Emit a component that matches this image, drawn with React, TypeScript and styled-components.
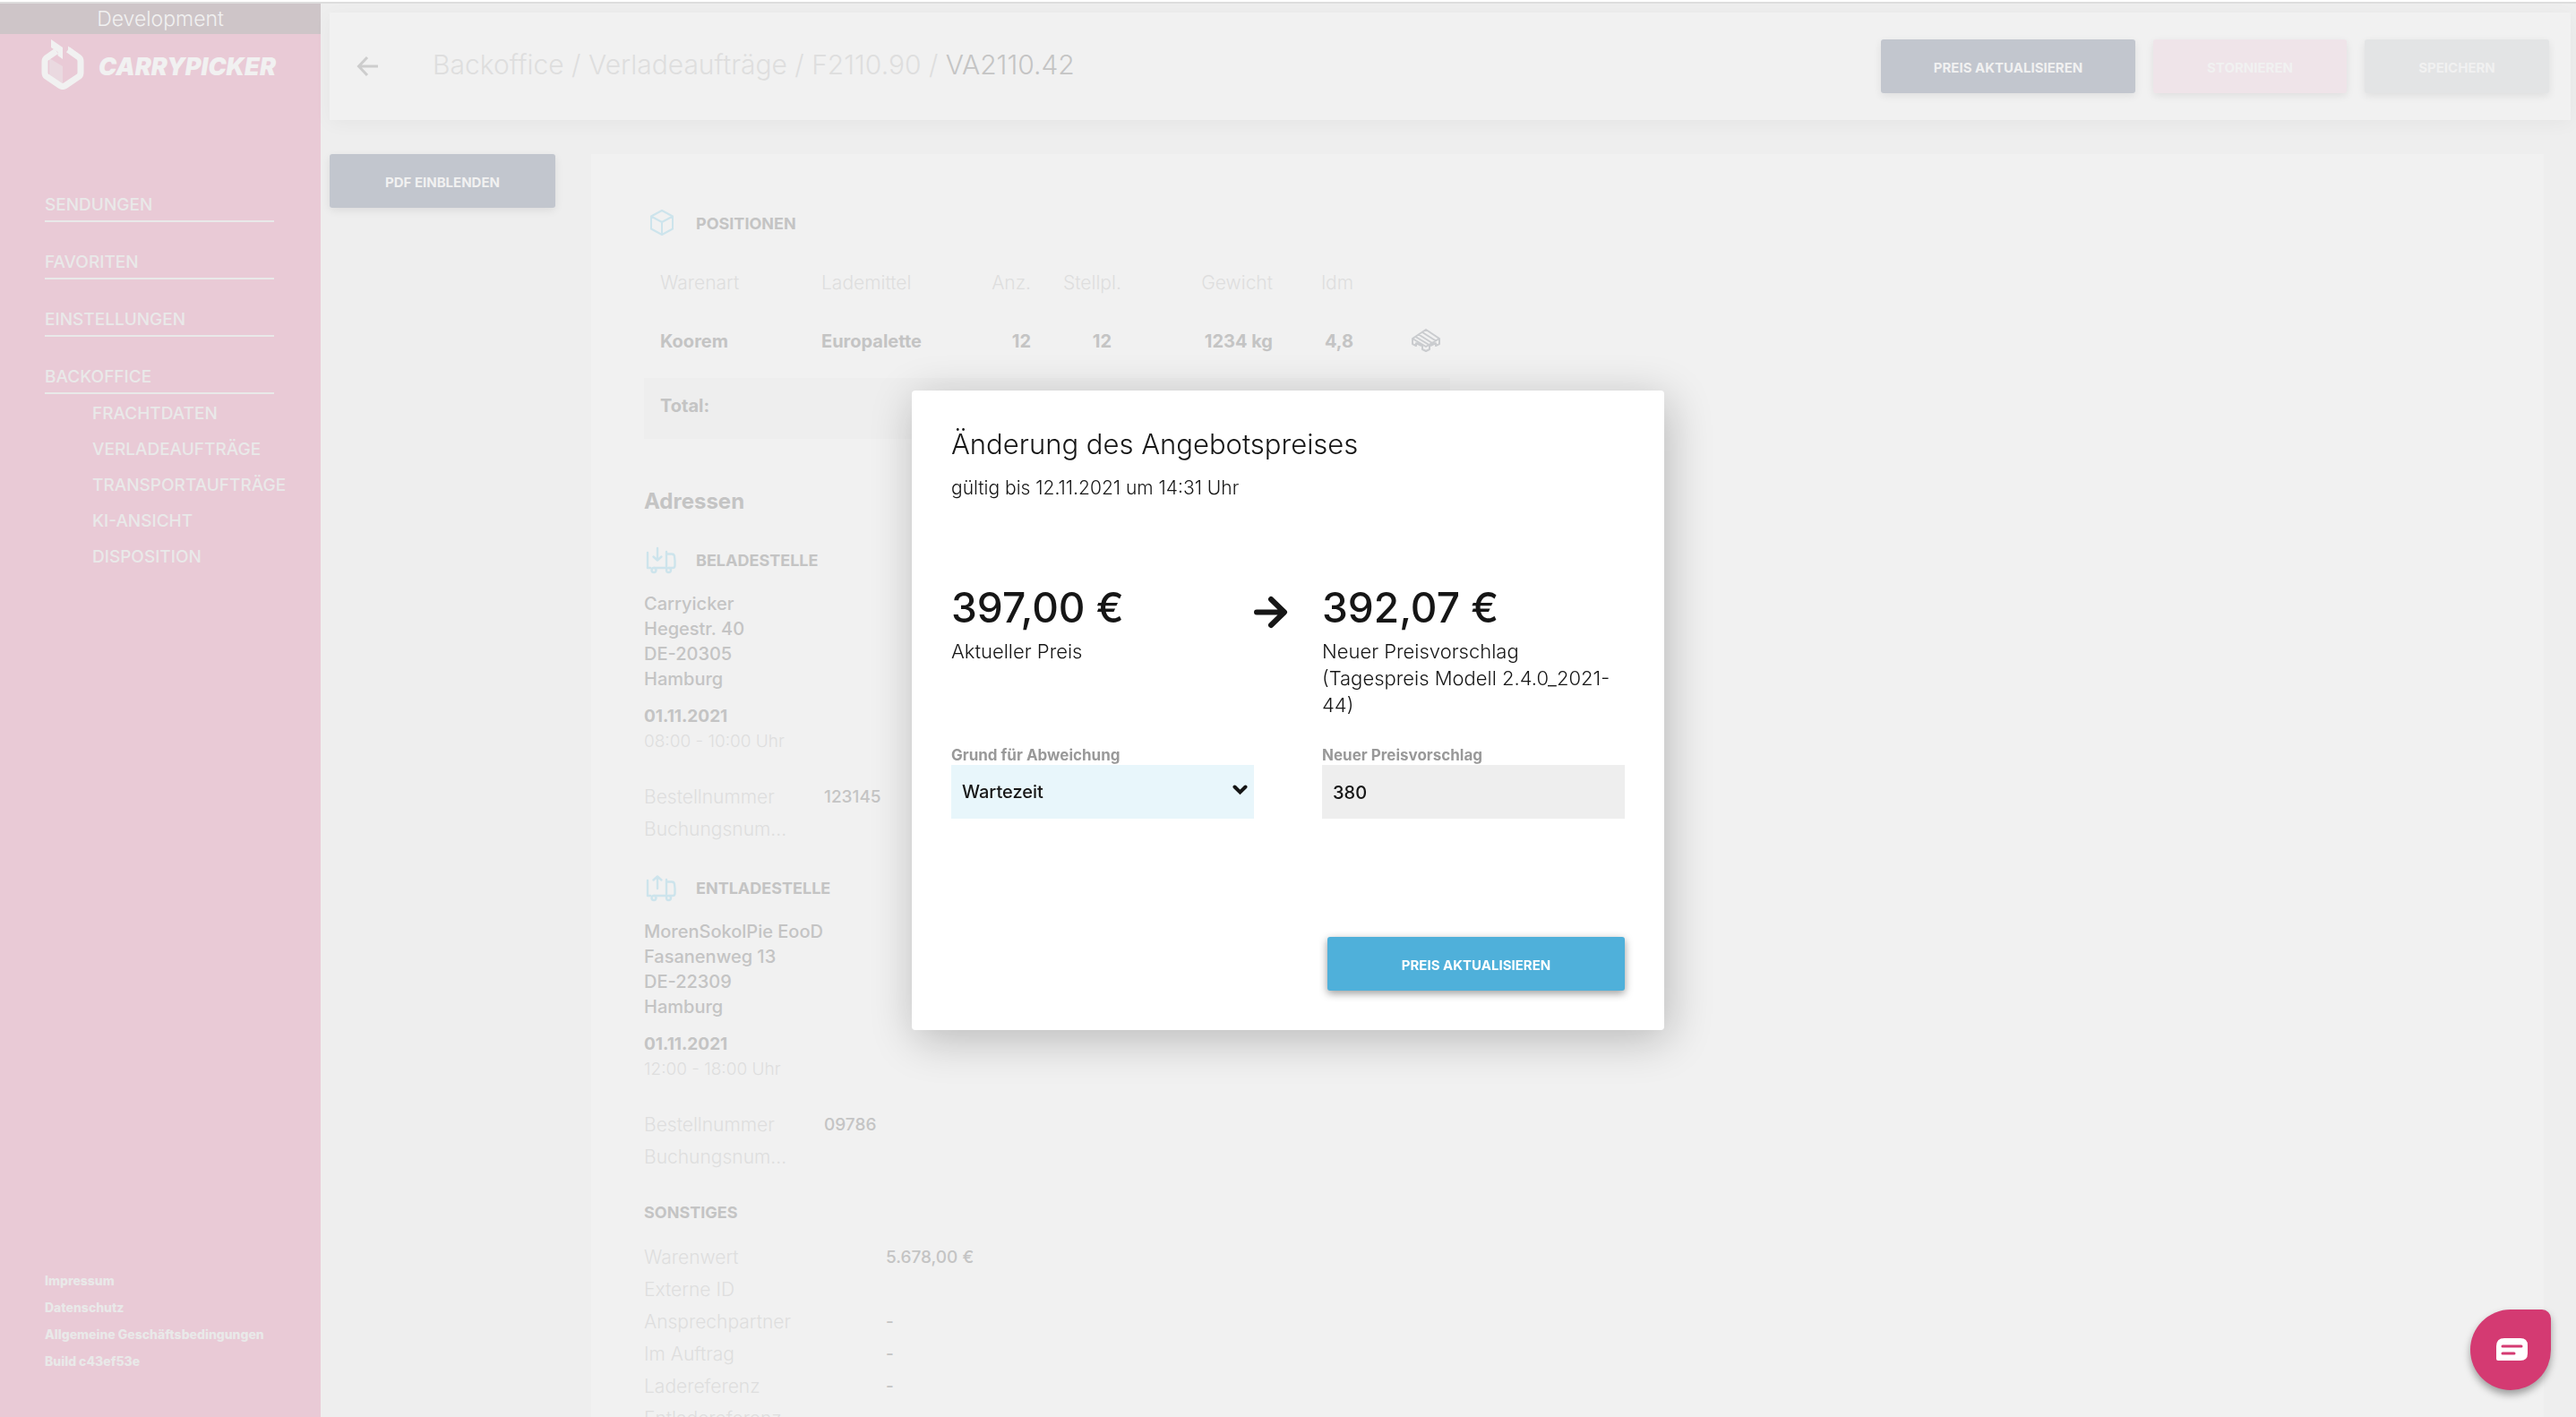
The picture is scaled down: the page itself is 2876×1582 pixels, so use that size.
import React from "react";
import styled, { createGlobalStyle } from "styled-components";

const color = {
  brand: "#e9cad6",
  brandText: "#e9e9e9",
  page: "#eeeeee",
  card: "#f1f1f1",
  strong: "#c4c4c4",
  faint: "#dedede",
  line: "#dddddd",
  icon: "#cde4ec",
  ink: "#161616",
};

const GlobalStyle = createGlobalStyle`
  * { box-sizing: border-box; }
  body {
    margin: 0;
    background: #ffffff;
    font-family: Inter, "Noto Sans", sans-serif;
    font-size: 20px;
    line-height: 28px;
  }
  h1, h2, h3, p, dl, dd, ul, address { margin: 0; padding: 0; }
  button, input, select { font-family: inherit; }
`;

const Shell = styled.div`
  display: flex;
  flex-direction: column;
  height: 100vh;
  padding-top: 2px;
  overflow: hidden;
`;

const Columns = styled.div`
  display: flex;
  flex: 1;
  min-height: 0;
  border-top: 2px solid ${color.line};
  background: ${color.page};
`;

const Sidebar = styled.aside`
  display: flex;
  flex-direction: column;
  flex: 0 0 358px;
  min-width: 0;
  background: ${color.brand};
  color: ${color.brandText};
`;

const Environment = styled.div`
  background: #cec5c8;
  color: #f1f1f1;
  font-size: 23px;
  font-weight: 300;
  line-height: 34px;
  text-align: center;
`;

const Brand = styled.a`
  display: flex;
  align-items: center;
  gap: 16px;
  padding: 6px 0 0 46px;
  color: ${color.card};
  font-size: 27px;
  font-style: italic;
  font-weight: 900;
  line-height: 32px;
  text-decoration: none;

  span { padding-top: 6px; }
`;

const Nav = styled.nav`
  display: flex;
  flex-direction: column;
  gap: 33px;
  padding: 117px 52px 0 50px;
`;

const NavLink = styled.a`
  display: block;
  padding-bottom: 5px;
  border-bottom: 2px solid ${color.brandText};
  color: inherit;
  font-size: 19px;
  font-weight: 500;
  line-height: 24px;
  text-decoration: none;
`;

const SubNav = styled.div`
  display: flex;
  flex-direction: column;
  gap: 16px;
  padding: 10px 0 0 53px;
`;

const SubLink = styled.a`
  color: inherit;
  font-size: 19px;
  font-weight: 500;
  line-height: 24px;
  text-decoration: none;
  white-space: nowrap;
`;

const Legal = styled.footer`
  display: flex;
  flex-direction: column;
  margin-top: auto;
  padding: 0 50px 47px;
  font-size: 14px;
  font-weight: 800;
  line-height: 30px;
  white-space: nowrap;

  a { color: inherit; text-decoration: none; }
`;

const Main = styled.main`
  display: flex;
  flex-direction: column;
  flex: 1;
  min-width: 0;
  gap: 38px;
  padding: 10px 6px 0 10px;
`;

const Header = styled.header`
  display: flex;
  flex: none;
  align-items: center;
  height: 120px;
  padding: 0 24px 0 28px;
  background: ${color.card};
  box-shadow: 0 4px 20px rgba(0, 0, 0, 0.04);
`;

const BackButton = styled.button`
  display: flex;
  padding: 0;
  border: 0;
  background: none;
  color: #cdcdcd;
`;

const Breadcrumb = styled.h1`
  flex: 1;
  padding: 0 0 5px 57px;
  color: ${color.faint};
  font-size: 30px;
  font-weight: 300;
  line-height: 40px;

  a { color: inherit; text-decoration: none; }
  strong { color: ${color.strong}; font-weight: 300; }
`;

const Actions = styled.div`
  display: flex;
  gap: 20px;
`;

const tones = {
  navy: "#c2c6ce",
  pink: "#efe4e9",
  grey: "#e3e4e5",
  blue: "#4fb0da",
};

const Button = styled.button<{ $tone: keyof typeof tones; $width: number }>`
  flex: none;
  width: ${(p) => p.$width}px;
  height: 60px;
  padding: 2px 0 0;
  border: 0;
  border-radius: 3px;
  background: ${(p) => tones[p.$tone]};
  color: ${(p) => (p.$tone === "blue" ? "#ffffff" : color.card)};
  box-shadow: 0 3px 10px rgba(0, 0, 0, ${(p) => (p.$tone === "blue" ? 0.4 : 0.08)});
  font-size: 15px;
  font-weight: 700;
`;

const Content = styled.div`
  display: flex;
  flex: 1;
  gap: 40px;
  min-height: 0;
  padding-right: 30px;
`;

const Card = styled.section`
  flex: 1;
  min-width: 0;
  padding: 62px 59px 0;
  overflow: hidden;
  background: ${color.card};
  color: ${color.strong};
`;

const SectionHead = styled.div`
  display: flex;
  align-items: center;
  gap: 18px;
  height: 32px;
  color: ${color.icon};
`;

const SectionTitle = styled.h3`
  color: ${color.strong};
  font-size: 18px;
  font-weight: 700;
  line-height: 28px;
`;

const Table = styled.table`
  width: 900px;
  margin-top: 16px;
  border-collapse: collapse;
  table-layout: fixed;
  line-height: 24px;
`;

const Col = styled.col<{ $share: number }>`
  width: ${(p) => p.$share}%;
`;

const Th = styled.th<{ $right?: boolean }>`
  padding: 22px 18px 20px;
  color: ${color.faint};
  font-size: 21px;
  font-weight: 300;
  text-align: ${(p) => (p.$right ? "right" : "left")};
  white-space: nowrap;
`;

const Td = styled.td<{ $right?: boolean }>`
  padding: 21px 18px 29px;
  font-weight: 700;
  text-align: ${(p) => (p.$right ? "right" : "left")};
  white-space: nowrap;
`;

const IconCell = styled.td`
  padding: 0 10px 10px 0;
  color: #cacccf;
  text-align: right;

  svg { display: block; margin-left: auto; }
`;

const TotalCell = styled.td`
  padding: 19px 18px 25px;
  background: ${color.page};
  font-weight: 700;
`;

const GroupTitle = styled.h2`
  margin: 54px 0 34px;
  font-size: 24px;
  font-weight: 700;
  line-height: 32px;
`;

const Stop = styled.section`
  margin-bottom: 32px;
`;

const Address = styled.address`
  margin-top: 18px;
  font-style: normal;
  font-weight: 500;
`;

const Slot = styled.p`
  margin: 14px 0 30px;
  color: ${color.faint};
  font-size: 19px;
  font-weight: 300;

  strong { display: block; color: ${color.strong}; font-weight: 700; }
`;

const Facts = styled.dl<{ $label: number }>`
  display: grid;
  grid-template-columns: ${(p) => p.$label}px 1fr;
  line-height: 36px;

  dt { color: ${color.faint}; font-size: 21px; font-weight: 300; }
  dd { font-size: 19px; font-weight: 500; }
`;

const Other = styled.section`
  display: flex;
  flex-direction: column;
  gap: 18px;
  margin-top: -2px;
`;

const Backdrop = styled.div`
  position: fixed;
  inset: 4px 0 0;
  display: grid;
  place-items: center;
`;

const Dialog = styled.form`
  width: 840px;
  padding: 40px 44px 44px;
  border-radius: 4px;
  background: #ffffff;
  box-shadow: 4px 10px 50px rgba(0, 0, 0, 0.24);
  color: ${color.ink};
`;

const DialogTitle = styled.h2`
  font-size: 31px;
  font-weight: 300;
  line-height: 40px;
`;

const Validity = styled.p`
  margin: 14px 0 90px;
  font-size: 21px;
  font-weight: 300;
  line-height: 30px;
`;

const Caption = styled.p`
  font-size: 22px;
  font-weight: 300;
  line-height: 30px;
`;

const Pair = styled.div`
  display: grid;
  grid-template-columns: 1fr 76px 1fr;
`;

const Price = styled.p`
  margin-bottom: 6px;
  font-size: 46px;
  font-weight: 500;
  line-height: 56px;
`;

const ArrowSlot = styled.div`
  padding-top: 14px;
`;

const Fields = styled.div`
  display: grid;
  grid-template-columns: 1fr 1fr;
  column-gap: 76px;
  margin: 30px 0 132px;
`;

const Field = styled.div`
  display: flex;
  flex-direction: column;
`;

const Label = styled.label`
  color: #999999;
  font-size: 17px;
  font-weight: 700;
  line-height: 22px;
`;

const SelectBox = styled.div`
  position: relative;

  svg {
    position: absolute;
    top: 22px;
    right: 7px;
    pointer-events: none;
  }
`;

const Select = styled.select`
  display: block;
  width: 100%;
  height: 60px;
  padding: 0 12px;
  border: 0;
  border-radius: 0;
  appearance: none;
  background: #e8f6fb;
  color: ${color.ink};
  font-size: 20px;
  font-weight: 500;
`;

const Input = styled.input`
  width: 100%;
  height: 60px;
  padding: 2px 12px 0;
  border: 0;
  background: ${color.page};
  color: ${color.ink};
  font-size: 20px;
  font-weight: 500;
`;

const DialogActions = styled.div`
  display: flex;
  justify-content: flex-end;
`;

const ChatButton = styled.button`
  position: fixed;
  right: 28px;
  bottom: 30px;
  display: grid;
  place-items: center;
  width: 90px;
  height: 90px;
  padding: 0 0 0 4px;
  border: 0;
  border-radius: 45px 10px 45px 45px;
  background: #d43a72;
  box-shadow: 0 5px 8px rgba(0, 0, 0, 0.35);
`;

const LogoMark = () => (
  <svg width="48" height="56" viewBox="0 0 48 56" fill="none" aria-hidden="true">
    <path d="M9 21 24 30V49L9 40Z" fill="#ead9e0" />
    <path
      d="M17 13 6 20.500Q4 22 4 24.500V37Q4 40 6 41.500L21 51.500Q24 53.500 27 51.500L42 41.500Q44 40 44 37V24.500Q44 21.500 42 20L30 11.500"
      stroke="#f1f1f1"
      strokeWidth="7"
    />
    <path d="M11 0 24 9V22L18.500 18V14L11 9Z" fill="#f1f1f1" />
    <path d="M30 7.500 36 12V18L30 14Z" fill="#f1f1f1" />
  </svg>
);

const ArrowLeft = () => (
  <svg width="30" height="26" viewBox="0 0 30 26" fill="none" stroke="currentColor" strokeWidth="3" aria-hidden="true">
    <path d="M26 13H5M14 3 4.500 13 14 23" />
  </svg>
);

const ArrowRight = () => (
  <svg width="38" height="38" viewBox="0 0 38 38" fill="none" stroke={color.ink} strokeWidth="6" strokeLinecap="round" strokeLinejoin="round" aria-hidden="true">
    <path d="M3 19.500H33M19 5 34 19.500 19 34" />
  </svg>
);

const Chevron = () => (
  <svg width="17" height="12" viewBox="0 0 17 12" fill="none" stroke={color.ink} strokeWidth="4" strokeLinecap="round" aria-hidden="true">
    <path d="M2.500 2.500 8.500 8.500 14.500 2.500" />
  </svg>
);

const Cube = () => (
  <svg width="40" height="32" viewBox="0 0 40 32" fill="none" stroke="currentColor" strokeWidth="2" strokeLinejoin="round" aria-hidden="true">
    <path d="M20 1 32 7.500V21.500L20 28 8 21.500V7.500ZM8 7.500 20 14 32 7.500M20 14V28" />
  </svg>
);

const Truck = ({ unload = false }: { unload?: boolean }) => (
  <svg width="40" height="32" viewBox="0 0 40 32" fill="none" stroke="currentColor" strokeWidth="2.400" strokeLinecap="round" strokeLinejoin="round" aria-hidden="true">
    <path d="M4 7V24H7M11 24H24M28 24H32Q34.500 24 34.500 21.500V16L34 11Q33.500 8.500 31 8.500H25M25 6V24" />
    <circle cx="11" cy="26.500" r="2.500" />
    <circle cx="27.500" cy="26.500" r="2.500" />
    <path d={unload ? "M15 16V3M10.500 6.500 15 2.500 19.500 6.500" : "M15 2V15M10.500 11.500 15 15.500 19.500 11.500"} />
  </svg>
);

const Pallet = () => (
  <svg width="34" height="26" viewBox="0 0 34 26" fill="none" stroke="currentColor" strokeWidth="2" strokeLinejoin="round" aria-hidden="true">
    <path d="M17 1 32 11 17 20 2 11ZM5.500 9 20.500 18M9 6.500 24 16M13 4 28 13.500M2 11V17L6 19V15.500M32 11V17L28 19V15.500M13 18V23L17 25 21 23V18M6 16 12 19M28 16 22 19" />
  </svg>
);

const ChatIcon = () => (
  <svg width="36" height="26" viewBox="0 0 36 26" aria-hidden="true">
    <path d="M9 0H27Q35 0 35 8V17Q35 25 27 25H2Q0 25 0 23V9Q0 0 9 0Z" fill="#ffffff" />
    <path d="M7 9H28M7 17H20" stroke="#d43a72" strokeWidth="3" strokeLinecap="round" />
  </svg>
);

const navItems = ["SENDUNGEN", "FAVORITEN", "EINSTELLUNGEN"];
const backofficeItems = ["FRACHTDATEN", "VERLADEAUFTRÄGE", "TRANSPORTAUFTRÄGE", "KI-ANSICHT", "DISPOSITION"];
const legalItems = ["Impressum", "Datenschutz", "Allgemeine Geschäftsbedingungen"];
const columnShares = [20, 20, 10, 10, 20, 10, 10];

const stops = [
  {
    title: "BELADESTELLE",
    unload: false,
    lines: ["Carryicker", "Hegestr. 40", "DE-20305", "Hamburg"],
    date: "01.11.2021",
    time: "08:00 - 10:00 Uhr",
    order: "123145",
  },
  {
    title: "ENTLADESTELLE",
    unload: true,
    lines: ["MorenSokolPie EooD", "Fasanenweg 13", "DE-22309", "Hamburg"],
    date: "01.11.2021",
    time: "12:00 - 18:00 Uhr",
    order: "09786",
  },
];

const otherFacts = [
  ["Warenwert", "5.678,00 €"],
  ["Externe ID", ""],
  ["Ansprechpartner", "-"],
  ["Im Auftrag", "-"],
  ["Ladereferenz", "-"],
  ["Entladereferenz", "-"],
];

export default function App() {
  return (
    <>
      <GlobalStyle />
      <Shell>
        <Columns>
          <Sidebar>
            <Environment>Development</Environment>
            <Brand href="#">
              <LogoMark />
              <span>CARRYPICKER</span>
            </Brand>
            <Nav>
              {navItems.map((item) => (
                <NavLink key={item} href="#">{item}</NavLink>
              ))}
              <div>
                <NavLink href="#">BACKOFFICE</NavLink>
                <SubNav>
                  {backofficeItems.map((item) => (
                    <SubLink key={item} href="#">{item}</SubLink>
                  ))}
                </SubNav>
              </div>
            </Nav>
            <Legal>
              {legalItems.map((item) => (
                <a key={item} href="#">{item}</a>
              ))}
              <span>Build c43ef53e</span>
            </Legal>
          </Sidebar>

          <Main>
            <Header>
              <BackButton type="button" aria-label="Zurück">
                <ArrowLeft />
              </BackButton>
              <Breadcrumb>
                <a href="#">Backoffice</a> / <a href="#">Verladeaufträge</a> / <a href="#">F2110.90</a> / <strong>VA2110.42</strong>
              </Breadcrumb>
              <Actions>
                <Button $tone="navy" $width={284}>PREIS AKTUALISIEREN</Button>
                <Button $tone="pink" $width={216}>STORNIEREN</Button>
                <Button $tone="grey" $width={206}>SPEICHERN</Button>
              </Actions>
            </Header>

            <Content>
              <Button $tone="navy" $width={252}>PDF EINBLENDEN</Button>
              <Card>
                <SectionHead>
                  <Cube />
                  <SectionTitle>POSITIONEN</SectionTitle>
                </SectionHead>
                <Table>
                  <colgroup>
                    {columnShares.map((share, i) => (
                      <Col key={i} $share={share} />
                    ))}
                  </colgroup>
                  <thead>
                    <tr>
                      <Th>Warenart</Th>
                      <Th>Lademittel</Th>
                      <Th $right>Anz.</Th>
                      <Th $right>Stellpl.</Th>
                      <Th $right>Gewicht</Th>
                      <Th $right>ldm</Th>
                      <Th />
                    </tr>
                  </thead>
                  <tbody>
                    <tr>
                      <Td>Koorem</Td>
                      <Td>Europalette</Td>
                      <Td $right>12</Td>
                      <Td $right>12</Td>
                      <Td $right>1234 kg</Td>
                      <Td $right>4,8</Td>
                      <IconCell><Pallet /></IconCell>
                    </tr>
                    <tr>
                      <TotalCell colSpan={7}>Total:</TotalCell>
                    </tr>
                  </tbody>
                </Table>

                <GroupTitle>Adressen</GroupTitle>
                {stops.map((stop) => (
                  <Stop key={stop.title}>
                    <SectionHead>
                      <Truck unload={stop.unload} />
                      <SectionTitle>{stop.title}</SectionTitle>
                    </SectionHead>
                    <Address>
                      {stop.lines.map((line) => (
                        <div key={line}>{line}</div>
                      ))}
                    </Address>
                    <Slot>
                      <strong>{stop.date}</strong>
                      {stop.time}
                    </Slot>
                    <Facts $label={201}>
                      <dt>Bestellnummer</dt>
                      <dd>{stop.order}</dd>
                      <dt>Buchungsnum...</dt>
                      <dd />
                    </Facts>
                  </Stop>
                ))}
                <Other>
                  <SectionTitle>SONSTIGES</SectionTitle>
                  <Facts $label={270}>
                    {otherFacts.map(([name, value]) => (
                      <React.Fragment key={name}>
                        <dt>{name}</dt>
                        <dd>{value}</dd>
                      </React.Fragment>
                    ))}
                  </Facts>
                </Other>
              </Card>
            </Content>
          </Main>
        </Columns>
      </Shell>

      <ChatButton type="button" aria-label="Chat öffnen">
        <ChatIcon />
      </ChatButton>

      <Backdrop>
        <Dialog role="dialog" aria-labelledby="dialog-title" onSubmit={(e) => e.preventDefault()}>
          <DialogTitle id="dialog-title">Änderung des Angebotspreises</DialogTitle>
          <Validity>gültig bis 12.11.2021 um 14:31 Uhr</Validity>
          <Pair>
            <div>
              <Price>397,00 €</Price>
              <Caption>Aktueller Preis</Caption>
            </div>
            <ArrowSlot>
              <ArrowRight />
            </ArrowSlot>
            <div>
              <Price>392,07 €</Price>
              <Caption>
                Neuer Preisvorschlag
                <br />
                (Tagespreis Modell 2.4.0_2021-
                <wbr />
                44)
              </Caption>
            </div>
          </Pair>
          <Fields>
            <Field>
              <Label htmlFor="reason">Grund für Abweichung</Label>
              <SelectBox>
                <Select id="reason" defaultValue="Wartezeit">
                  <option>Wartezeit</option>
                </Select>
                <Chevron />
              </SelectBox>
            </Field>
            <Field>
              <Label htmlFor="proposal">Neuer Preisvorschlag</Label>
              <Input id="proposal" defaultValue="380" />
            </Field>
          </Fields>
          <DialogActions>
            <Button type="submit" $tone="blue" $width={332}>PREIS AKTUALISIEREN</Button>
          </DialogActions>
        </Dialog>
      </Backdrop>
    </>
  );
}
